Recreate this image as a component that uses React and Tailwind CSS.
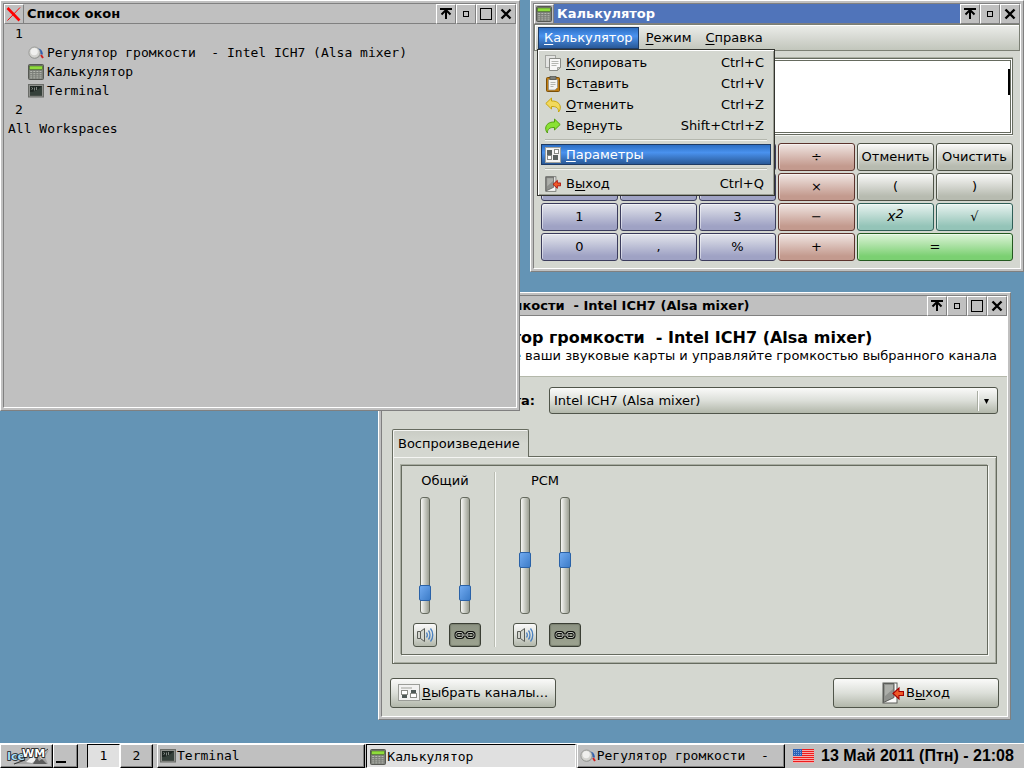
import { useState } from "react";
import clsx from "clsx";

/* ---------- Icons ---------- */

const MixerIcon = () => (
  <svg width="16" height="16" viewBox="0 0 16 16" className="shrink-0">
    <path d="M9 4.500c3 0 4.500 2 4.800 5" stroke="#2f5fb0" strokeWidth="2.400" fill="none" />
    <path d="M13 10l2 3" stroke="#cc2222" strokeWidth="2" />
    <ellipse cx="6.800" cy="10" rx="5" ry="3.600" fill="#8d8f8b" />
    <circle cx="6.500" cy="7.600" r="5.600" fill="#d4d4d0" stroke="#8f918d" strokeWidth="0.800" />
    <circle cx="6.200" cy="6.600" r="3.600" fill="#f0f0ee" />
  </svg>
);

const CalcIcon = () => (
  <svg width="16" height="16" viewBox="0 0 16 16" className="shrink-0">
    <rect x="0.500" y="0.500" width="15" height="15" rx="1" fill="#7b7e78" stroke="#565853" />
    <rect x="1.500" y="2" width="13" height="3.500" fill="#8fdc3c" stroke="#3c5a20" strokeWidth="0.500" />
    {[7, 9.2, 11.4, 13.4].map((y) =>
      [2.2, 5.3, 8.4, 11.5].map((x) => (
        <rect key={`${x}-${y}`} x={x} y={y} width="2" height="1" fill="#b6b9b1" />
      ))
    )}
  </svg>
);

const TerminalIcon = () => (
  <svg width="16" height="16" viewBox="0 0 16 16" className="shrink-0">
    <rect x="0.500" y="1.500" width="15" height="12.500" fill="#8f918d" stroke="#6b6d69" />
    <rect x="2" y="3" width="12" height="9.500" fill="#1f2723" />
    <path d="M2 9c4 0 8-2 12-6v9.500H2z" fill="#36413b" />
    <path d="M3.500 4.500l1.500 1-1.500 1M6.500 4.500v3M8.500 4v3" stroke="#a9b0ab" strokeWidth="0.700" fill="none" />
  </svg>
);

const CopyIcon = () => (
  <svg width="16" height="16" viewBox="0 0 16 16" className="shrink-0">
    <rect x="0.500" y="0.500" width="10" height="12" fill="#e4e5e2" stroke="#a4a6a1" />
    <path d="M4.500 3.500h11v9l-3 3h-8z" fill="#f8f8f7" stroke="#8a8c87" />
    <path d="M6.500 6.500h7M6.500 8.500h7M6.500 10.500h5" stroke="#b4b6b1" />
    <path d="M15.500 12.500h-3v3z" fill="#d0d2cc" stroke="#8a8c87" strokeWidth="0.700" />
  </svg>
);

const PasteIcon = () => (
  <svg width="16" height="16" viewBox="0 0 16 16" className="shrink-0">
    <rect x="1.500" y="1.500" width="13" height="14" rx="1" fill="#c17d11" stroke="#7a4f08" />
    <path d="M3.500 3.500h9v8l-2.500 2.500H3.500z" fill="#f3f3f1" stroke="#8a8c87" strokeWidth="0.700" />
    <rect x="5" y="0.500" width="6" height="3" fill="#7c7f7a" stroke="#4e504c" strokeWidth="0.700" />
    <path d="M5.500 6.500h5M5.500 8.500h5M5.500 10.500h3" stroke="#b4b6b1" />
  </svg>
);

const UndoIcon = () => (
  <svg width="16" height="16" viewBox="0 0 16 16" className="shrink-0">
    <path
      d="M0.800 6.500L6.500 1v3c5.500-.3 8.500 2.500 8.800 6 .1 2-.5 3.800-1.800 5 .3-4-2.500-5.800-7-5.500V12z"
      fill="#f2d95c"
      stroke="#c4a000"
      strokeWidth="0.900"
    />
  </svg>
);

const RedoIcon = () => (
  <svg width="16" height="16" viewBox="0 0 16 16" className="shrink-0">
    <path
      d="M15.200 6.500L9.500 1v3C4 3.700 1 6.500.7 10c-.1 2 .5 3.800 1.800 5-.3-4 2.500-5.800 7-5.500V12z"
      fill="#8ae234"
      stroke="#4a9a06"
      strokeWidth="0.900"
    />
  </svg>
);

const PrefsIcon = () => (
  <svg width="16" height="16" viewBox="0 0 16 16" className="shrink-0">
    <rect x="0.500" y="0.500" width="15" height="15" fill="#f4f4f3" stroke="#a0a29d" />
    <rect x="2.500" y="3.500" width="4" height="4" fill="#5b6260" stroke="#5b6260" />
    <rect x="2.500" y="8.500" width="4" height="4" fill="#fff" stroke="#8a8c87" />
    <rect x="9.500" y="2.500" width="4" height="4" fill="#fff" stroke="#8a8c87" />
    <rect x="8.500" y="8.500" width="4" height="4" fill="#5b6260" stroke="#5b6260" />
  </svg>
);

const ChannelsIcon = () => (
  <svg width="22" height="18" viewBox="0 0 22 18" className="shrink-0">
    <rect x="0.500" y="0.500" width="21" height="16" fill="#f2f2f1" stroke="#9b9d98" />
    <rect x="3" y="3" width="11" height="2" fill="#c9cac6" />
    <rect x="3.500" y="6.500" width="6" height="4" fill="#fff" stroke="#8a8c87" />
    <rect x="4" y="11" width="5" height="3" fill="#4e5856" />
    <rect x="13" y="6" width="5" height="3" fill="#4e5856" />
    <rect x="12.500" y="9.500" width="6" height="4" fill="#fff" stroke="#8a8c87" />
  </svg>
);

const QuitIcon = ({ className }) => (
  <svg viewBox="0 0 22 22" className={clsx("shrink-0", className)}>
    <rect x="1" y="1" width="14" height="20" fill="#fbfbfa" stroke="#5b5d59" />
    <path d="M1.500 1.500h10.500v14L1.500 20.500z" fill="#8f918d" stroke="#5b5d59" />
    <path d="M3 3l8 0v4L3 14z" fill="#adafaa" />
    <path
      d="M11 11.500l6-5.500v3.500h4.500v4H17V17z"
      fill="#ef5a29"
      stroke="#a40000"
      strokeWidth="1.100"
    />
  </svg>
);

const SpeakerIcon = () => (
  <svg width="18" height="16" viewBox="0 0 18 16" className="shrink-0">
    <path d="M1.500 4.500h3l4-3v13l-4-3h-3z" fill="#d3d6cf" stroke="#5a5d57" />
    <path d="M4.500 4.500v7" stroke="#5a5d57" />
    <path
      d="M10.500 5.500c1 1.500 1 3.500 0 5M12.500 3.500c2 2.500 2 6.500 0 9M14.500 1.500c3 3.500 3 9.500 0 13"
      stroke="#4a80c0"
      strokeWidth="1.300"
      fill="none"
    />
  </svg>
);

const ChainIcon = () => (
  <svg width="22" height="8" viewBox="0 0 22 8" className="shrink-0">
    <g fill="none" stroke="#0c0d0b" strokeWidth="3">
      <rect x="2" y="1.500" width="7" height="5" rx="2" />
      <rect x="13" y="1.500" width="7" height="5" rx="2" />
      <path d="M6 4h10" />
    </g>
    <g fill="none" stroke="#b9bdb4" strokeWidth="1">
      <rect x="2" y="1.500" width="7" height="5" rx="2" />
      <rect x="13" y="1.500" width="7" height="5" rx="2" />
      <path d="M6 4h10" />
    </g>
  </svg>
);

const FlagIcon = () => (
  <svg width="21" height="14" viewBox="0 0 21 14" className="shrink-0">
    <rect width="21" height="14" fill="#fbe9e9" />
    {[0, 2, 4, 6, 8, 10, 12].map((y) => (
      <rect key={y} y={y} width="21" height="1.300" fill="#ee1c1c" />
    ))}
    <rect width="9" height="7" fill="#2a62b8" />
    {[1, 3, 5].map((y) =>
      [1, 3, 5, 7].map((x) => <rect key={`${x}-${y}`} x={x} y={y} width="1" height="1" fill="#7fa4dc" />)
    )}
  </svg>
);

const IceLogo = () => (
  <svg width="46" height="20" viewBox="0 0 46 20" className="shrink-0">
    <path d="M8 18l12-5 6-4 5 2 6-5 8-2-4 7 3 7z" fill="#a4a4a4" />
    <path d="M22 16l7-6 3 4-4 3zM35 10l8-6-5 9z" fill="#f0f0f0" />
    <path d="M29 18l4-7 2 4 3-2 5 5z" fill="#5c5c5c" />
    <path d="M10 18l11-4M33 11l11-8" stroke="#333" strokeWidth="1" />
    <text
      x="3"
      y="14"
      fontSize="11"
      fontWeight="bold"
      fontFamily="DejaVu Sans"
      fill="#a8dcf4"
      stroke="#101820"
      strokeWidth="1.600"
      paintOrder="stroke"
    >
      Ice
    </text>
    <text
      x="18"
      y="11"
      fontSize="11"
      fontWeight="bold"
      fontFamily="DejaVu Sans"
      fill="#fff"
      stroke="#101010"
      strokeWidth="1.600"
      paintOrder="stroke"
    >
      WM
    </text>
  </svg>
);

/* ---------- Window frame ---------- */

const frameGlyphs = {
  rollup: <path d="M4 5h12M10 7v8M10 6l-4.500 4.500M10 6l4.500 4.500" strokeWidth="2" />,
  minimize: <rect x="7.500" y="7.500" width="5" height="5" strokeWidth="1" />,
  maximize: <rect x="4.500" y="4.500" width="11" height="11" strokeWidth="1" />,
  close: <path d="M5.500 5.500l9 9M14.500 5.500l-9 9" strokeWidth="2.400" />,
};

const FrameButton = ({ kind }) => (
  <button
    type="button"
    aria-label={kind}
    className="h-5 w-5 shrink-0 border border-t-white border-l-white border-r-[#808080] border-b-[#808080] bg-[#c0c0c0]"
  >
    <svg width="18" height="18" viewBox="1 1 18 18" fill="none" stroke="#000">
      {frameGlyphs[kind]}
    </svg>
  </button>
);

const Window = ({ title, icon, buttons, active, className, children }) => (
  <section
    className={clsx(
      "absolute border border-t-white border-l-white border-r-[#808080] border-b-[#808080] bg-[#c0c0c0] p-[2px]",
      className
    )}
  >
    <div className="flex h-full flex-col border border-t-[#808080] border-l-[#808080] border-r-white border-b-white">
      <header className="flex h-5 shrink-0">
        <div className="flex h-5 w-5 shrink-0 items-center justify-center border border-t-white border-l-white border-r-[#808080] border-b-[#808080]">
          {icon}
        </div>
        <h2
          className={clsx(
            "min-w-0 flex-1 overflow-hidden border-b border-[#808080] pl-[3px] text-[13px] leading-[19px] font-bold whitespace-pre",
            active ? "bg-[#5074ba] text-white" : "text-black"
          )}
        >
          {title}
        </h2>
        {buttons.map((kind) => (
          <FrameButton key={kind} kind={kind} />
        ))}
      </header>
      {children}
    </div>
  </section>
);

/* ---------- Window list ---------- */

const ListRow = ({ icon, children }) => (
  <li className={clsx("flex h-[19px] items-center gap-[3px]", icon ? "pl-6" : "pl-[11px]")}>
    {icon}
    <span className="whitespace-pre">{children}</span>
  </li>
);

const WindowList = () => (
  <Window
    title="Список окон"
    icon={
      <svg width="16" height="16" viewBox="0 0 16 16">
        <path d="M1.500 2l12 12.500" stroke="#f00" strokeWidth="2.600" />
        <path d="M14 1.500l-12.500 13" stroke="#f00" strokeWidth="1" />
      </svg>
    }
    buttons={["rollup", "minimize", "maximize", "close"]}
    className="top-0 left-0 h-[411px] w-[520px]"
  >
    <ul className="flex-1 font-['DejaVu_Sans_Mono',monospace] text-[13px]">
      <ListRow>1</ListRow>
      <ListRow icon={<MixerIcon />}>Регулятор громкости  - Intel ICH7 (Alsa mixer)</ListRow>
      <ListRow icon={<CalcIcon />}>Калькулятор</ListRow>
      <ListRow icon={<TerminalIcon />}>Terminal</ListRow>
      <ListRow>2</ListRow>
      <li className="flex h-[19px] items-center pl-1">All Workspaces</li>
    </ul>
  </Window>
);

/* ---------- Calculator ---------- */

// before / accelerator / after
const Label = ({ parts }) => (
  <span className="whitespace-pre">
    {parts[0]}
    <span className="underline underline-offset-2">{parts[1]}</span>
    {parts[2]}
  </span>
);

const menuItems = [
  { icon: <CopyIcon />, parts: ["", "К", "опировать"], keys: "Ctrl+C" },
  { icon: <PasteIcon />, parts: ["Вст", "а", "вить"], keys: "Ctrl+V" },
  { icon: <UndoIcon />, parts: ["", "О", "тменить"], keys: "Ctrl+Z" },
  { icon: <RedoIcon />, parts: ["Ве", "р", "нуть"], keys: "Shift+Ctrl+Z" },
  null,
  { icon: <PrefsIcon />, parts: ["", "П", "араметры"], selected: true },
  null,
  { icon: <QuitIcon className="h-4 w-4" />, parts: ["В", "ы", "ход"], keys: "Ctrl+Q" },
];

const CalcMenu = () => (
  <div
    role="menu"
    className="absolute top-full left-[-1px] z-10 mt-px w-[238px] border border-[#33342f] bg-[#d4d7d0] px-[3px] pt-[2px] pb-px text-black shadow-[inset_1px_1px_0_#fff,inset_-1px_-1px_0_#9a9d93]"
  >
    {menuItems.map((item, i) =>
      item ? (
        <button
          key={i}
          type="button"
          role="menuitem"
          className={clsx(
            "flex h-[21px] w-full items-center border pr-1.5 pl-[3px]",
            item.selected
              ? "border-[#1f3b63] bg-linear-to-b from-[#2c6fc4] via-[#4a92ee] via-40% to-[#2a5a98] text-white"
              : "border-transparent"
          )}
        >
          {item.icon}
          <span className="ml-[5px] flex-1 text-left">
            <Label parts={item.parts} />
          </span>
          <span>{item.keys}</span>
        </button>
      ) : (
        <div key={i} className="flex h-2 items-center px-1">
          <div className="h-0.5 w-full border-t border-b border-t-[#b4b7ad] border-b-[#f4f5f2]" />
        </div>
      )
    )}
  </div>
);

const tones = {
  number: "border-[#3b3c5c] from-[#e4e6ec] to-[#9fa2c4]",
  operator: "border-[#5c332c] from-[#f0e6e3] to-[#c39a8e]",
  plain: "border-[#4e5347] from-[#fafaf9] to-[#b7bbb0]",
  func: "border-[#2f5f57] from-[#e8f3f0] to-[#94c4b8]",
  equals: "border-[#23591f] from-[#dcf3d8] to-[#7bd072]",
};

const keys = [
  ["7", "number"],
  ["8", "number"],
  ["9", "number"],
  ["÷", "operator"],
  ["Отменить", "plain"],
  ["Очистить", "plain"],
  ["4", "number"],
  ["5", "number"],
  ["6", "number"],
  ["×", "operator"],
  ["(", "plain"],
  [")", "plain"],
  ["1", "number"],
  ["2", "number"],
  ["3", "number"],
  ["−", "operator"],
  ["x²", "func"],
  ["√", "func"],
  ["0", "number"],
  [",", "number"],
  ["%", "number"],
  ["+", "operator"],
  ["=", "equals"],
];

const Calculator = () => (
  <Window
    title="Калькулятор"
    icon={<CalcIcon />}
    active
    buttons={["rollup", "minimize", "close"]}
    className="top-0 left-[530px] h-[272px] w-[494px]"
  >
    <div className="flex flex-1 flex-col bg-[#d4d7d0]">
      <nav className="flex h-[27px] shrink-0 border border-[#7b7f74] bg-linear-to-b from-[#ecedea] to-[#c2c6bc] px-[3px] py-[2px] shadow-[inset_1px_1px_0_#fff]">
        <div className="relative">
          <button
            type="button"
            className="h-[22px] border border-[#1f3b63] bg-linear-to-b from-[#2c6fc4] via-[#4a92ee] via-40% to-[#2a5a98] px-[5px] text-white"
          >
            <Label parts={["", "К", "алькулятор"]} />
          </button>
          <CalcMenu />
        </div>
        <button type="button" className="h-[22px] px-[7px]">
          <Label parts={["", "Р", "ежим"]} />
        </button>
        <button type="button" className="h-[22px] px-[7px]">
          <Label parts={["", "С", "правка"]} />
        </button>
      </nav>
      <div className="flex flex-1 flex-col px-[7px] pt-[7px] pb-[7px]">
        <div className="flex h-[77px] border border-[#666b5f] bg-white p-px shadow-[0_1px_0_#f4f5f2,0_-1px_0_#a9ada2]">
          <div className="flex flex-1 border border-[#666b5f] pt-2">
            <input aria-label="Результат" readOnly className="min-w-0 flex-1 bg-transparent text-right outline-none" />
            <span className="h-[26px] w-0.5 bg-black" />
          </div>
        </div>
        <div className="mt-2 grid grid-cols-6 gap-0.5">
          {keys.map(([label, tone]) => (
            <button
              key={label}
              type="button"
              className={clsx(
                "h-7 rounded-[3px] border bg-linear-to-b to-85% whitespace-nowrap shadow-[inset_1px_1px_0_#ffffff80]",
                tones[tone],
                label === "=" && "col-span-2"
              )}
            >
              {label === "x²" ? (
                <i className="text-[14px] leading-4">
                  x<sup className="top-0 align-[3px] text-[13px] leading-3">2</sup>
                </i>
              ) : (
                label
              )}
            </button>
          ))}
        </div>
      </div>
    </div>
  </Window>
);

/* ---------- Mixer ---------- */

const buttonFace =
  "rounded-[3px] border border-[#50554a] bg-linear-to-b from-[#fafaf9] via-[#dcdfd9] to-[#b2b7aa]";

const Fader = ({ label, initial }) => {
  const [value, setValue] = useState(initial);
  return (
    <input
      type="range"
      aria-label={label}
      value={value}
      onChange={(e) => setValue(Number(e.target.value))}
      className="h-[117px] w-3 appearance-none bg-transparent [direction:rtl] [writing-mode:vertical-lr] [&::-webkit-slider-runnable-track]:h-[117px] [&::-webkit-slider-runnable-track]:w-2.5 [&::-webkit-slider-runnable-track]:rounded-[3px] [&::-webkit-slider-runnable-track]:border [&::-webkit-slider-runnable-track]:border-[#666b5f] [&::-webkit-slider-runnable-track]:bg-linear-to-r [&::-webkit-slider-runnable-track]:from-[#f6f7f4] [&::-webkit-slider-runnable-track]:to-[#9da194] [&::-webkit-slider-thumb]:ml-[-2px] [&::-webkit-slider-thumb]:h-4 [&::-webkit-slider-thumb]:w-3 [&::-webkit-slider-thumb]:appearance-none [&::-webkit-slider-thumb]:rounded-[2px] [&::-webkit-slider-thumb]:border [&::-webkit-slider-thumb]:border-[#2a62a8] [&::-webkit-slider-thumb]:bg-linear-to-br [&::-webkit-slider-thumb]:from-[#70aaf0] [&::-webkit-slider-thumb]:to-[#3c7cc8]"
    />
  );
};

const Channel = ({ name, level }) => (
  <div className="w-20 text-center">
    <div className="h-[17px] leading-[17px]">{name}</div>
    <div className="mt-2 grid grid-cols-2 justify-items-center">
      <Fader label={`${name} L`} initial={level} />
      <Fader label={`${name} R`} initial={level} />
    </div>
    <div className="mt-[9px] grid grid-cols-2 justify-items-center">
      <button type="button" aria-label="Звук" className={clsx("flex h-6 w-6 items-center justify-center", buttonFace)}>
        <SpeakerIcon />
      </button>
      <button
        type="button"
        aria-label="Связать каналы"
        className="flex h-6 w-8 items-center justify-center rounded-[3px] border border-[#3a3e34] bg-linear-to-b from-[#8d9383] to-[#9da390] shadow-[inset_0_0_1px_1px_#7a806f]"
      >
        <ChainIcon />
      </button>
    </div>
  </div>
);

const Mixer = () => (
  <Window
    title="Регулятор громкости  - Intel ICH7 (Alsa mixer)"
    icon={<MixerIcon />}
    buttons={["rollup", "minimize", "maximize", "close"]}
    className="top-[292px] left-[378px] h-[428px] w-[633px]"
  >
    <div className="flex flex-1 flex-col bg-[#d4d7d0]">
      <div className="flex h-[61px] shrink-0 items-center justify-end border-b border-[#b4b8aa] bg-white pr-2.5">
        <div>
          <h1 className="text-[16px] leading-5 font-bold whitespace-pre">
            Регулятор громкости  - Intel ICH7 (Alsa mixer)
          </h1>
          <p className="leading-4 whitespace-nowrap">
            Настройте ваши звуковые карты и управляйте громкостью выбранного канала
          </p>
        </div>
      </div>

      <div className="flex flex-1 flex-col px-2 pt-2.5 pb-2">
        <div className="flex items-center justify-end gap-3.5 pr-px">
          <label htmlFor="card" className="font-bold whitespace-nowrap">
            Звуковая карта:
          </label>
          <div className="relative w-[449px]">
            <select
              id="card"
              className={clsx("h-[27px] w-full appearance-none pl-1", buttonFace)}
            >
              <option>Intel ICH7 (Alsa mixer)</option>
            </select>
            <span className="pointer-events-none absolute top-1 right-0 flex h-5 w-[21px] items-center justify-center border-l border-[#a9ada2] pr-1 shadow-[inset_1px_0_0_#fff]">
              <svg width="5" height="5" viewBox="0 0 5 5">
                <path d="M0 0h5L2.500 5z" />
              </svg>
            </span>
          </div>
        </div>

        <div className="mt-[15px] flex flex-1 flex-col px-0.5">
          <div role="tablist" className="flex">
            <button
              type="button"
              role="tab"
              aria-selected="true"
              className="z-10 mb-[-1px] h-7 rounded-t-[2px] border border-b-0 border-[#666b5f] bg-linear-to-b from-[#c9ccc4] to-[#d4d7d0] to-50% pr-2 pl-[5px] shadow-[inset_1px_1px_0_#f4f5f2]"
            >
              Воспроизведение
            </button>
          </div>
          <div
            role="tabpanel"
            className="border border-[#666b5f] p-2 shadow-[inset_1px_1px_0_#f4f5f2,inset_-1px_-1px_0_#a9ada2]"
          >
            <div className="flex gap-[9px] border border-[#666b5f] pt-1.5 pb-[7px] pl-[3px] shadow-[1px_1px_0_#f8f9f6,-1px_-1px_0_#a9ada2]">
              <Channel name="Общий" level={12} />
              <div className="w-0.5 border-r border-l border-r-[#f8f9f6] border-l-[#b9bcb2]" />
              <Channel name="PCM" level={45} />
            </div>
          </div>
        </div>

        <div className="flex justify-between">
          <button type="button" className={clsx("flex h-[30px] w-[166px] items-center justify-center gap-0.5", buttonFace)}>
            <ChannelsIcon />
            <Label parts={["", "В", "ыбрать каналы..."]} />
          </button>
          <button type="button" className={clsx("flex h-[30px] w-[166px] items-center justify-center gap-0.5", buttonFace)}>
            <QuitIcon className="h-[22px] w-[22px]" />
            <Label parts={["В", "ы", "ход"]} />
          </button>
        </div>
      </div>
    </div>
  </Window>
);

/* ---------- Taskbar ---------- */

const raised =
  "border border-t-white border-l-white border-r-black border-b-black bg-[#c0c0c0] shadow-[inset_-1px_-1px_0_#808080]";
const sunken = "border border-t-black border-l-black border-r-white border-b-white bg-[#e0e0e0]";

const TaskButton = ({ icon, pressed, children }) => (
  <button
    type="button"
    className={clsx(
      "flex min-w-0 flex-1 items-center gap-px overflow-hidden font-['DejaVu_Sans_Mono',monospace] whitespace-pre",
      pressed ? sunken : raised,
      pressed ? "pt-0.5 pl-[3px]" : "pl-0.5"
    )}
  >
    {icon}
    {children}
  </button>
);

const Taskbar = () => (
  <footer className="flex h-[25px] shrink-0 border-t border-white bg-[#c0c0c0]">
    <button type="button" aria-label="IceWM" className={clsx("flex w-[53px] items-center justify-center", raised)}>
      <IceLogo />
    </button>
    <button type="button" aria-label="Show desktop" className={clsx("flex w-[25px] items-end pb-1 pl-0.5", raised)}>
      <span className="h-0.5 w-2.5 bg-black" />
    </button>
    <div className="ml-[9px] flex font-['DejaVu_Sans_Mono',monospace]">
      <button type="button" className={clsx("w-[33px]", sunken)}>
        1
      </button>
      <button type="button" className={clsx("w-[33px]", raised)}>
        2
      </button>
    </div>
    <div className="ml-1 flex min-w-0 flex-1 gap-px">
      <TaskButton icon={<TerminalIcon />}>Terminal</TaskButton>
      <TaskButton icon={<CalcIcon />} pressed>
        Калькулятор
      </TaskButton>
      <TaskButton icon={<MixerIcon />}>Регулятор громкости  -</TaskButton>
    </div>
    <div className="flex w-[239px] shrink-0 items-center gap-[7px] pl-2">
      <FlagIcon />
      <time className="font-['Liberation_Sans',sans-serif] text-[16px] font-bold whitespace-nowrap">
        13 Май 2011 (Птн) - 21:08
      </time>
    </div>
  </footer>
);

const App = () => {
  return (
    <div className="flex min-h-screen flex-col bg-[#6494b5] font-['DejaVu_Sans',sans-serif] text-[13px] text-black">
      <main className="relative flex-1 overflow-hidden">
        <Mixer />
        <Calculator />
        <WindowList />
      </main>
      <Taskbar />
    </div>
  );
};

export default App;
